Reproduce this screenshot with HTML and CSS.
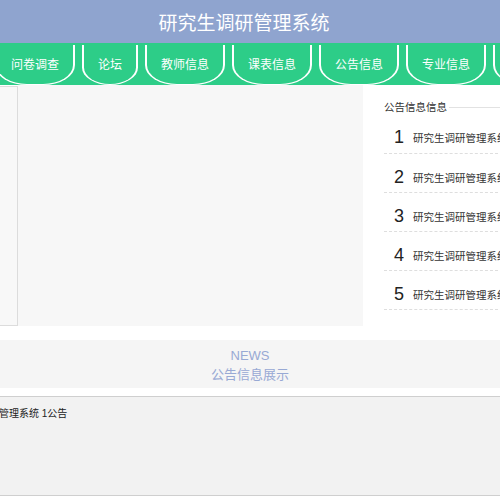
FILE: index.html
```html
<!DOCTYPE html>
<html lang="zh-CN">
<head>
    <meta charset="UTF-8">
    <meta name="viewport" content="width=device-width, initial-scale=1.0">
    <title>研究生调研管理系统</title>
    <link rel="stylesheet" href="styles.css">
</head>
<body>

<header class="top">
    <h1 class="top__title">研究生调研管理系统</h1>
</header>

<nav class="menu">
    <a class="menu__item" href="#">问卷调查</a>
    <a class="menu__item" href="#">论坛</a>
    <a class="menu__item" href="#">教师信息</a>
    <a class="menu__item" href="#">课表信息</a>
    <a class="menu__item" href="#">公告信息</a>
    <a class="menu__item" href="#">专业信息</a>
    <a class="menu__item" href="#">个人中心</a>
</nav>

<div class="board">
    <div class="board__side"></div>
    <div class="board__banner"></div>
    <aside class="notice">
        <div class="notice__head">
            <span class="notice__title">公告信息信息</span>
            <span class="notice__rule"></span>
        </div>
        <ul class="notice__list">
            <li class="notice__row"><span class="notice__num">1</span><span class="notice__text">研究生调研管理系统 1公告</span></li>
            <li class="notice__row"><span class="notice__num">2</span><span class="notice__text">研究生调研管理系统 2公告</span></li>
            <li class="notice__row"><span class="notice__num">3</span><span class="notice__text">研究生调研管理系统 3公告</span></li>
            <li class="notice__row"><span class="notice__num">4</span><span class="notice__text">研究生调研管理系统 4公告</span></li>
            <li class="notice__row"><span class="notice__num">5</span><span class="notice__text">研究生调研管理系统 5公告</span></li>
        </ul>
    </aside>
</div>

<section class="news">
    <div class="news__en">NEWS</div>
    <div class="news__cn">公告信息展示</div>
</section>

<div class="ticker">
    <p class="ticker__text">研究生调研管理系统 1公告</p>
</div>

</body>
</html>
```

FILE: styles.css
```css
html, body {
    margin: 0;
    overflow: hidden;
}
body {
    font-family: "Liberation Sans", "Noto Sans CJK SC", sans-serif;
    color: #333;
    background: #fff;
}
.top {
    height: 43px;
    background: #8fa4cf;
    display: flex;
    align-items: center;
    justify-content: center;
    padding-right: 12px;
}
.top__title {
    margin: 0;
    font-size: 19px;
    font-weight: normal;
    color: #fff;
}
.menu {
    height: 42px;
    background: #2dcd88;
    display: flex;
    gap: 7px;
    margin-left: -5px;
    white-space: nowrap;
}
.menu__item {
    flex: none;
    display: flex;
    align-items: center;
    justify-content: center;
    box-sizing: border-box;
    height: 40px;
    margin-top: 2px;
    padding: 0 14px 2px;
    border: 2px solid #fff;
    border-top: none;
    border-bottom-width: 1px;
    border-radius: 0 0 32px 32px / 0 0 20px 20px;
    color: #fff;
    font-size: 12px;
    text-decoration: none;
}
.board {
    display: flex;
    height: 241px;
    margin-left: -42px;
}
.board__side {
    flex: none;
    width: 59px;
    margin-top: 1px;
    background: #f8f8f8;
    border: 1px solid #dcdcdc;
    border-left: none;
}
.board__banner {
    flex: none;
    width: 345px;
    background: #f7f7f7;
}
.notice {
    flex: none;
    width: 220px;
    padding: 14px 0 0 21px;
    background: #fff;
}
.notice__head {
    display: flex;
    align-items: center;
    gap: 2px;
}
.notice__title {
    font-size: 10.5px;
    color: #333;
}
.notice__rule {
    flex: 1;
    height: 1px;
    background: #e2e2e2;
    margin-top: 2px;
}
.notice__list {
    list-style: none;
    margin: 0;
    padding: 0;
}
.notice__row {
    display: flex;
    align-items: center;
    box-sizing: border-box;
    height: 39px;
    padding: 8px 0 0 10px;
    border-bottom: 1px dashed #dedede;
    white-space: nowrap;
}
.notice__row:first-child {
    height: 40px;
}
.notice__num {
    width: 19px;
    font-size: 18px;
    color: #222;
}
.notice__text {
    font-size: 10.5px;
    color: #333;
}
.news {
    margin-top: 14px;
    height: 48px;
    padding-top: 1px;
    box-sizing: border-box;
    background: #f5f5f5;
    display: flex;
    flex-direction: column;
    align-items: center;
    justify-content: center;
    color: #98a9d4;
    font-size: 13px;
    line-height: 19px;
}
.ticker {
    margin-top: 8px;
    height: 98px;
    background: #f2f2f2;
    border-top: 1px solid #cfcfcf;
    border-bottom: 1px solid #cfcfcf;
    overflow: hidden;
}
.ticker__text {
    margin: 8px 0 0 -51px;
    font-size: 10px;
    color: #222;
    white-space: nowrap;
}
```
